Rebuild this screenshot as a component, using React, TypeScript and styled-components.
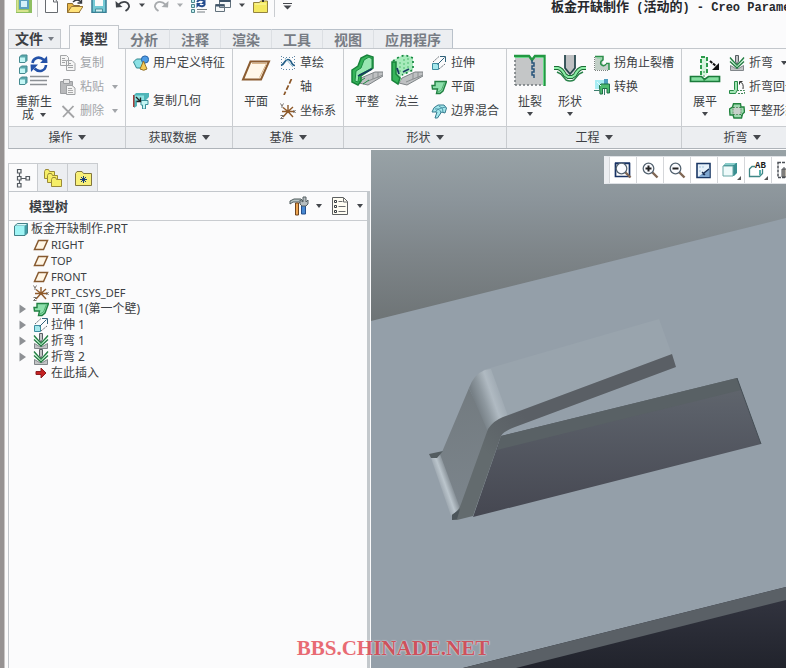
import React from "react";
import styled, { createGlobalStyle, css } from "styled-components";

const GlobalStyle = createGlobalStyle`
  * { box-sizing: border-box; }
  body {
    margin: 0;
    background: #fbfbfc;
    color: #3c3f44;
    font: 12px/16px "Noto Sans", "Noto Sans CJK SC", sans-serif;
    overflow: hidden;
  }
  button {
    margin: 0;
    padding: 0;
    border: 0;
    background: none;
    color: inherit;
    font: inherit;
    cursor: pointer;
  }
  svg { display: block; flex: none; }
`;

/* ---------- layout ---------- */

const Window = styled.div`
  position: relative;
  display: flex;
  flex-direction: column;
  min-height: 100vh;
  padding-left: 4px;
  border-left: 4px solid #969292;
  box-shadow: inset 1px 0 0 #c9c7c7;
  overflow: hidden;
`;

const TitleBar = styled.header`
  display: flex;
  justify-content: space-between;
  height: 25px;
  padding-left: 8px;
`;

const QuickAccess = styled.div`
  display: flex;
  gap: 8px;
  height: 17px;
`;

const QuickButton = styled.button`
  height: 13px;
`;

const QuickDivider = styled.span`
  width: 1px;
  margin: 0 -3px;
  background: #c9ccd0;
`;

const Title = styled.h1`
  flex: 0 0 235px;
  min-width: 0;
  margin: 0;
  white-space: pre;
  color: #26282c;
  font: bold 12px/12px "Liberation Mono", "Noto Sans CJK SC", monospace;
`;

const TitleHan = styled.span`
  font-family: "Noto Sans CJK SC", sans-serif;
  font-size: 13px;
`;

const TabBar = styled.nav`
  display: flex;
  align-items: flex-end;
  height: 24px;
  border-bottom: 1px solid #c3c7cc;
  font-size: 14px;
  font-weight: bold;
`;

const FileButton = styled.button`
  display: flex;
  align-items: center;
  justify-content: center;
  gap: 5px;
  width: 53px;
  height: 19px;
  margin-right: 8px;
  border: 1px solid #c3c7cc;
  border-bottom: 0;
  background: #eceef1;
`;

const RibbonTab = styled.button<{ $active?: boolean }>`
  height: 19px;
  padding: 0 11px;
  border-top: 1px solid #b9c1ca;
  border-right: 1px solid #dcdfe3;
  background: #eceef1;
  color: #777c84;
  line-height: 17px;
  &:last-child { border-right-color: #b9c1ca; }
  ${(p) =>
    p.$active &&
    css`
      height: 24px;
      margin-bottom: -1px;
      padding: 0 10px;
      border: 1px solid #c3c7cc;
      border-bottom: 0;
      background: #fbfbfc;
      color: #3c3f44;
      line-height: 25px;
    `}
`;

const Ribbon = styled.div`
  display: flex;
  height: 100px;
  border-left: 1px solid #c9ccd0;
  border-bottom: 1px solid #aeb3b9;
`;

const Group = styled.section<{ $last?: boolean }>`
  display: flex;
  flex-direction: column;
  flex: ${(p) => (p.$last ? "1 0 auto" : "none")};
  border-right: 1px solid #c9ccd0;
`;

const GroupBody = styled.div`
  display: flex;
  flex: 1;
  padding: 2px 7px 0 3px;
`;

const GroupLabel = styled.button<{ $last?: boolean }>`
  display: flex;
  align-items: center;
  justify-content: center;
  gap: 5px;
  width: ${(p) => (p.$last ? "120px" : "100%")};
  height: 21px;
`;

const GroupFooter = styled.div`
  border-top: 1px solid #c9ccd0;
  background: #eceef1;
`;

const LargeButton = styled.button<{ $wide?: boolean }>`
  display: flex;
  flex-direction: column;
  align-items: center;
  width: ${(p) => (p.$wide ? "44px" : "40px")};
  padding-top: 3px;
  line-height: ${(p) => (p.$wide ? "13px" : "14px")};
  svg + span { margin-top: 9px; }
  span + svg { margin-top: 3px; }
`;

const LargeLabel = styled.span`
  display: flex;
  align-items: center;
  gap: 6px;
`;

const SmallColumn = styled.div<{ $spread?: boolean }>`
  display: flex;
  flex-direction: column;
  gap: ${(p) => (p.$spread ? "14px" : "0")};
  margin-left: 4px;
`;

const SmallButton = styled.button`
  display: flex;
  align-items: center;
  gap: 4px;
  height: 24px;
  white-space: nowrap;
  &:disabled { color: #a2a5a9; }
  span + svg { margin-left: 4px; }
`;

const Workspace = styled.main`
  display: grid;
  grid-template-columns: 363px minmax(0, 1fr);
  flex: 1;
`;

const Sidebar = styled.aside`
  display: flex;
  flex-direction: column;
  padding-top: 14px;
`;

const PanelTabs = styled.div`
  display: flex;
  height: 28px;
`;

const PanelTab = styled.button<{ $active?: boolean }>`
  display: flex;
  align-items: center;
  justify-content: center;
  width: 30px;
  border: 1px solid #c9ccd0;
  border-left-width: ${(p) => (p.$active ? "1px" : "0")};
  border-bottom: 0;
  background: ${(p) => (p.$active ? "#fbfbfc" : "#eceef1")};
`;

const Panel = styled.div`
  flex: 1;
  margin-right: 1px;
  border: 1px solid #c3c7cc;
  border-right: 3px solid #c3c8cc;
  border-bottom: 0;
`;

const PanelHeader = styled.div`
  display: flex;
  align-items: center;
  height: 29px;
  padding: 0 4px 0 20px;
  border-bottom: 1px solid #c9ccd0;
`;

const PanelTitle = styled.h2`
  flex: 1;
  margin: 0;
  font-size: 13px;
  line-height: 16px;
`;

const MenuButton = styled.button`
  display: flex;
  align-items: center;
  gap: 7px;
  margin-left: 8px;
`;

const Tree = styled.ul`
  margin: 0;
  padding: 0;
  list-style: none;
`;

const TreeRow = styled.li<{ $root?: boolean }>`
  display: flex;
  align-items: center;
  gap: 2px;
  height: 16px;
  padding-left: ${(p) => (p.$root ? "4px" : "10px")};
  white-space: nowrap;
`;

const TreeToggle = styled.button`
  display: flex;
  align-items: center;
  width: 12px;
  height: 16px;
`;

const TreeName = styled.span<{ $latin?: boolean }>`
  font-size: ${(p) => (p.$latin ? "11px" : "12px")};
`;

const Viewport = styled.section`
  position: relative;
  display: flex;
  min-width: 0;
  margin-top: 1px;
`;

const ViewToolbar = styled.div`
  position: absolute;
  top: 6px;
  left: 233px;
  display: flex;
  width: 190px;
  height: 28px;
  border: 1px solid #dfe2e6;
  border-left: 5px solid #eceef1;
  background: #fff;
`;

const ViewButton = styled.button`
  display: flex;
  align-items: center;
  justify-content: center;
  flex: none;
  width: 27px;
  border-left: 1px solid #d5d7da;
`;

const Watermark = styled.footer`
  position: absolute;
  right: 0;
  bottom: 8px;
  left: -4px;
  color: #e2353f;
  font: bold 21px/24px "Liberation Serif", serif;
  text-align: center;
  text-shadow: 0 0 1px #fff, 0 0 2px #fff;
  opacity: 0.72;
  pointer-events: none;
`;

/* ---------- icons ---------- */

type IconProps = { children: React.ReactNode; size?: number };
const Icon = ({ children, size = 16 }: IconProps) => (
  <svg width={size} height={size} viewBox={`0 0 ${size} ${size}`} fill="none" aria-hidden="true">
    {children}
  </svg>
);

/* Toolbar glyphs are drawn on a 16px grid whose first three rows are above the window edge. */
const QuickIcon = ({ children }: { children: React.ReactNode }) => (
  <svg width="16" height="13" viewBox="0 3 16 13" fill="none" aria-hidden="true">
    {children}
  </svg>
);

const Caret = ({ color = "#44474c", size = 8 }: { color?: string; size?: number }) => (
  <svg width={size} height={size === 8 ? 5 : 4} viewBox="0 0 8 5" preserveAspectRatio="none" aria-hidden="true">
    <path d="M0 0h8L4 5z" fill={color} />
  </svg>
);

const QuickCaret = ({ color = "#44474c" }: { color?: string }) => (
  <svg width="6" height="13" viewBox="0 0 6 13" aria-hidden="true">
    <path d="M0 3.500h6L3 7z" fill={color} />
  </svg>
);

const PlaneIcon = () => (
  <Icon>
    <path d="M5.500 3.500h9l-4 9h-9z" fill="#fff6e6" stroke="#875a30" strokeWidth="1.500" />
  </Icon>
);

const CsysIcon = () => (
  <Icon>
    <path d="M8 8.500V2M8 8.500h6M8 8.500 3 14M8 8.500 3 4.500M8 8.500l5 5.500M8 8.500 13 4M8 8.500H2" stroke="#8f5a2a" strokeWidth="1.400" />
    <path d="M0.500 .5 2 3l1.500-2.500M2 3v2M13.500 7l2 3M15.500 7l-2 3M.5 12.500h3l-3 3h3" stroke="#77716c" />
  </Icon>
);

const WallIcon = () => (
  <Icon>
    <path d="M4 2.500h11.500L12 12l-3 2.500H5.500L6.500 10H1.500L1 6.500h3z" fill="#8ee0ac" stroke="#218042" strokeWidth="1.400" />
    <path d="M13.500 3.500 10.500 11 7 13" stroke="#4eae6e" />
  </Icon>
);

const ExtrudeIcon = () => (
  <Icon>
    <path d="M1.500 8.500h6v6h-6z" fill="#a5e8ec" stroke="#3e8ca0" />
    <path d="M2 7 8 1.500M8 14l6-5" stroke="#646b72" strokeDasharray="2 1" />
    <path d="m6.500 9.500 7-7M9 1.500h5.500V7" stroke="#31627b" />
  </Icon>
);

const BendIcon = () => (
  <Icon>
    <path d="M1.500 15.500v-5l5 3h3l5-3v5z" fill="#c2c4c5" stroke="#81868a" />
    <path d="M6.500 .5h3v6L8 9 6.500 7z" fill="#c2c4c5" stroke="#565d62" />
    <path d="m1 2.500 7 8 7-8M1 6.500l7 6.500 7-6.500" stroke="#217b40" strokeWidth="1.300" />
    <path d="m1.500 4.500 6.500 7 6.500-7" stroke="#89d8a1" />
  </Icon>
);

const CopyIcon = () => (
  <Icon>
    <path d="M.5.500h6l2 2v8h-8zM6.500 5.500h5.500l3 3v7H6.500z" fill="#f5f5f5" stroke="#a3a5a7" />
    <path d="M2 3.500h3M2 5.500h4M2 7.500h3M8 8.500h3M8 10.500h5M8 12.500h5" stroke="#a3a5a7" />
  </Icon>
);

const PasteIcon = () => (
  <Icon>
    <path d="M.5 2.500h12v12H.5z" fill="#b8b9bb" stroke="#9c9ea1" />
    <path d="M3.500.500h6v4h-6z" fill="#e6e6e6" stroke="#9c9ea1" />
    <path d="M6.500 6.500h5.500L15 9v6.500H6.500z" fill="#f4f4f4" stroke="#a0a2a4" />
    <path d="M8 9.500h4M8 11.500h5M8 13.500h5" stroke="#aaa" />
  </Icon>
);

const DeleteIcon = () => (
  <Icon>
    <path d="M2.500 3 14 14.500M13.500 3 3 14" stroke="#a3a4a6" strokeWidth="1.800" />
  </Icon>
);

const RegenerateIcon = () => (
  <Icon size={32}>
    {[1, 12, 23].map((y) => (
      <g key={y}>
        <path d={`M1.500 ${y + 2} 3.500 ${y}h5.500v5.500l-2 2h-5.500z`} fill="#5aa9ad" stroke="#458a90" />
        <path d={`M2 ${y + 2.5}h5v4.500H2z`} fill="#c4f6f5" />
      </g>
    ))}
    <path d="M14.500 9C15 4 21 1.500 26 6M28 11c-.5 6-7 8-11.500 3.500" stroke="#2452a8" strokeWidth="2.600" />
    <path d="m29 2 .5 7h-7.500zM13 18l-.5-7.500H20z" fill="#2452a8" />
    <path d="M12 22.500h19M12 26.500h17M12 30.500h17" stroke="#8c9095" strokeWidth="1.400" />
  </Icon>
);

const UserFeatureIcon = () => (
  <Icon>
    <path d="m.5 7 3-3h7v6l-3 3h-4z" fill="#8ce1e5" stroke="#2e858d" />
    <circle cx="12" cy="4.500" r="3.600" fill="#4e9ce6" stroke="#2461a7" />
    <path d="m10.500 6 3.500 8q-3 2.500-7 0z" fill="#f5ca54" stroke="#91712c" />
  </Icon>
);

const CopyGeometryIcon = () => (
  <Icon>
    <path d="M1 2 3 0h13v4l-3 3v9H9V8H4v5l-3 2z" fill="#4fb5b8" />
    <path d="M.750 2v12" stroke="#a43b38" strokeWidth="1.500" />
    <path d="M2 2.500h9v5H2z" fill="#8fe3e2" />
    <path d="M8 7.500h7v4h-2.500V16H9.500v-4H8z" fill="#c4f6f4" stroke="#3b8f98" />
    <path d="m3 4 4 4M7.500 4.500V8.500H3.500" stroke="#222" strokeWidth="1.300" />
  </Icon>
);

const LargePlaneIcon = () => (
  <Icon size={32}>
    <path d="M10.500 7.500h18.500l-8 18H3z" fill="#fff7e9" stroke="#8b5c31" strokeWidth="2" />
    <path d="M12 9.500h14.500L19.500 23.500" stroke="#d9b58b" />
  </Icon>
);

const SketchIcon = () => (
  <Icon>
    <path d="M1.500 1v14M14.500 1v14M3 2.500h10M3 14.500h10" stroke="#5f86a5" strokeDasharray="1 2" />
    <path d="M1 10.500Q3 10 5 6.500q3-4 6 0 1.500 4 4 4" stroke="#245e87" strokeWidth="1.700" />
    <path d="m5 3 8 9" stroke="#8ab8d0" />
  </Icon>
);

const AxisIcon = () => (
  <Icon>
    <path d="M11.500 0 4 16" stroke="#8a5527" strokeWidth="1.700" strokeDasharray="5 2" />
  </Icon>
);

const FlatWallIcon = () => (
  <Icon size={32}>
    <path d="m10 24 14-6h8v4L17 31l-9-2z" fill="#bfc1c3" stroke="#7e8386" />
    <path d="m17 27 15-6M22 19v6M27 18v6" stroke="#8b9092" />
    <path d="M1 16 7 12l3-8 6-3 6 2v11l-12 8v5l-3 4-6-3z" fill="#36b45a" stroke="#18823b" strokeWidth="1.500" />
    <path d="m5 17 5-3 3-8 5-3 3 2v9L8 21l-1 7-3-1z" fill="#98e7b1" stroke="#1a8c41" />
    <path d="m7 22 14-7" stroke="#173b62" strokeWidth="1.800" />
    <path d="m8 28 6-4M12 30l6-4" stroke="#208c43" />
  </Icon>
);

const FlangeIcon = () => (
  <Icon size={32}>
    <path d="m11 24 13-6h8v4l-16 9-8-2z" fill="#bfc1c3" stroke="#7e8386" />
    <path d="m15 28 17-7M22 19v6M27 18v6" stroke="#8b9092" />
    <path d="M1 7 8 3l5-2 9 2v13l-12 6v4l-3 4-6-3z" fill="#a7eabb" />
    <path d="M1 8h4v12l4 4-2 6-6-4z" fill="#36b45a" stroke="#18823b" strokeWidth="1.500" />
    <path d="M2 7 8 3l6-2 8 3v12L11 21" stroke="#158740" strokeWidth="1.700" strokeDasharray="2 3" />
    <path d="M9 8v12M13 5v12M17 4v10" stroke="#4fbb70" strokeDasharray="2 2" />
    <path d="m6 14 2 6M12 18l6-3" stroke="#173b62" strokeWidth="1.800" />
  </Icon>
);

const BlendIcon = () => (
  <Icon>
    <path d="M1 9q1-5 6-7h6l2.500 3-1.500 5-3.500-1-4 6H4l2-6z" fill="#a3e7ec" stroke="#377a8d" />
    <path d="M4 6q5-1 6 4M8 3q5 2 4 6M4 9q3-4 11-5" stroke="#4d94a7" />
  </Icon>
);

const RipIcon = () => (
  <Icon size={32}>
    <path d="M1 2h28v29H1z" fill="#c4c6c7" />
    <path d="M1 31h27M1 6v25" stroke="#70777b" strokeWidth="1.500" strokeDasharray="2 2" />
    <path d="M15 1h6l-3 4z" fill="#fbfbfc" />
    <path d="M0 2h15l3 4 3-4h9.500v30" stroke="#239843" strokeWidth="2.400" />
    <path d="M1 3.500h13M29.500 4v27M22 3.500h7" stroke="#65d987" />
    <path d="M18 6v3h2v3h-2v3h2v3h-2v3h2v3" stroke="#28547b" strokeWidth="1.500" />
  </Icon>
);

const FormIcon = () => (
  <Icon size={32}>
    <path d="M10.500 1h11v14q-1 4-5.500 6-4.500-2-5.500-6z" fill="#bfc1c3" />
    <path d="M11 1v13l5 6 5-6V1" stroke="#23444a" strokeWidth="1.700" />
    <path d="M0 14h4q4 1 7 7l3 2h4l3-2q3-6 7-7h4" stroke="#1d6c36" strokeWidth="4" />
    <path d="M0 14h4q4 1 7 7l3 2h4l3-2q3-6 7-7h4" stroke="#8ceda7" strokeWidth="2" />
    <path d="m3 18 4 2 5 6q4 2 8 0l5-6 4-2" stroke="#29834b" strokeWidth="1.500" />
  </Icon>
);

const CornerReliefIcon = () => (
  <Icon>
    <path d="M1 1h8v5a3 3 0 0 0 0 3.500h6V15H1z" fill="#c3d0c8" />
    <path d="M.500 2v13.500H15" stroke="#7b827f" strokeDasharray="1 1" />
    <path d="M1 1.500h8v3.500M15 15V8.500h-3M9.500 5a2.800 2.800 0 1 0 2.500 4" stroke="#2c8f4a" strokeWidth="1.500" />
    <path d="M7 5.500V3H3" stroke="#7bdc97" />
  </Icon>
);

const ConvertIcon = () => (
  <Icon>
    <path d="M1 1h11l-2 2v7H1z" fill="#a8edf3" />
    <path d="M10 0h4v6h-4z" fill="#4f9fc0" />
    <path d="M5.500 6.500 7 5h8.500v9H13V9.500H8.500V15H6z" fill="#4ebc70" stroke="#1e6f46" />
    <path d="M0 11.500h5.500M10.500 10v6" stroke="#3b7e6e" />
    <path d="m3 3 4 4" stroke="#e3fbfd" />
  </Icon>
);

const UnbendIcon = () => (
  <Icon size={32}>
    <path d="M1.500 22.500h11l3 3 4-3h11v5h-29z" fill="#84dda0" stroke="#1b7b3b" strokeWidth="1.700" />
    <path d="M12 21V3h6v18" fill="#d8f4df" stroke="#2d9b4c" strokeWidth="2" strokeDasharray="4 2" />
    <path d="M15 17v10" stroke="#2d9b4c" strokeDasharray="2 2" />
    <path d="m21 7 7 6" stroke="#111" strokeWidth="2" strokeDasharray="3 1" />
    <path d="M30 9v7h-7z" fill="#111" />
  </Icon>
);

const BendBackIcon = () => (
  <Icon>
    <path d="M.5 11.500h4l1-1v-8h3v8.500l-2 3.500h-6z" fill="#a3e5b5" stroke="#258a46" />
    <path d="M8 11.500h7.500v3H8" stroke="#418757" strokeDasharray="2 1" />
    <path d="M11 3q4 1 3 7M10.500 5.500V2.500h3" stroke="#333" />
  </Icon>
);

const FlatPatternIcon = () => (
  <Icon>
    <path d="M4.500.750h7L12 4h3l.5 5-2 2-1 4H5l-1-3H1L.5 6l3-2z" fill="#9fd9b0" stroke="#23843f" strokeWidth="1.400" />
    <path d="M4 4.500h8v7H4z" fill="#c7d0ca" stroke="#67936e" strokeDasharray="2 1" />
    <path d="m3 3 2 2M11 11l2 2M12 4l-1 1M4 12l1-1" stroke="#2f7b45" />
  </Icon>
);

const FolderShape = ({ x, y }: { x: number; y: number }) => (
  <path d={`M${x} ${y + 2}l1-2h3l1 2h5v7h-10z`} fill="#f6ee67" stroke="#9b8b38" />
);

const FolderStackIcon = () => (
  <Icon size={20}>
    <FolderShape x={1.5} y={1.5} />
    <FolderShape x={4.5} y={5.5} />
    <FolderShape x={8.5} y={9.5} />
  </Icon>
);

const FavoritesIcon = () => (
  <Icon size={20}>
    <path d="M2.500 5.500 4 3.500h5l1.500 2h8v12h-16z" fill="#f8f078" stroke="#82763d" />
    <path d="M10.500 8v7M7 11.500h7M8 9l5 5M13 9l-5 5" stroke="#153b7a" />
  </Icon>
);

const ModelTreeIcon = () => (
  <Icon size={20}>
    <path d="M4.500 1.500h3.500v3.500H4.500zM4.500 8.500h3.500V12H4.500zM4.500 15.500h3.500V19H4.500zM13 8.500h3.500V12H13zM6.500 5v3.500M6.500 12v3.500M8 10.500h5" stroke="#555b61" strokeWidth="1.200" />
  </Icon>
);

const PartIcon = () => (
  <Icon>
    <path d="m1.500 5 3-2.500h10V12L12 14.500H1.500z" fill="#429da5" stroke="#438088" />
    <path d="M2 5h9.500v9H2z" fill="#9ff4f5" />
    <path d="m2.500 4.500 2-1.500h9.500l-2 1.500z" fill="#dafafa" />
  </Icon>
);

const InsertIcon = () => (
  <Icon>
    <path d="M3 6.500h5V3l5 5-5 5v-3.500H3z" fill="#c62222" stroke="#8d1e22" />
  </Icon>
);

const ToolsIcon = () => (
  <Icon size={20}>
    <path d="M1 8V5l4-2h7l3 3-2 2-3-2H4z" fill="#b8c5c5" stroke="#4e5a5c" />
    <path d="M6.500 7h3v12h-3z" fill="#eda653" stroke="#70451e" />
    <path d="M12.500 8h4v10h-4z" fill="#4889d2" stroke="#254f8c" />
    <path d="m11 4 3 2V1h3v5l2-2v4l-2 2h-4l-2-2z" fill="#b7bec0" stroke="#555f62" />
  </Icon>
);

const ListIcon = () => (
  <Icon size={20}>
    <path d="M2.500 1.500h11l4 4v13h-15z" fill="#fffdf3" stroke="#5e6061" />
    <path d="M13.500 2v4h4M8.500 5.500h4M8.500 10.500h7M8.500 15.500h7" stroke="#6b6c6e" />
    <path d="M4.500 4.500h2v2h-2zM4.500 9.500h2v2h-2zM4.500 14.500h2v2h-2z" stroke="#383d42" />
  </Icon>
);

const ZoomIcon = ({ kind }: { kind: "fit" | "in" | "out" }) => (
  <Icon size={18}>
    {kind === "fit" && <path d="M1.500 2.500h14v13h-14zM1 2h15" stroke="#183365" strokeWidth="1.700" />}
    <path d="m11 11 5.500 5.500" stroke="#806754" strokeWidth="2.400" />
    <circle cx="7.500" cy="7.500" r="5.300" fill="#fbfcff" stroke="#566572" strokeWidth="1.300" />
    {kind !== "fit" && <path d="M4.500 7.500h6" stroke="#222" strokeWidth="2" />}
    {kind === "in" && <path d="M7.500 4.500v6" stroke="#222" strokeWidth="2" />}
  </Icon>
);

const RepaintIcon = () => (
  <Icon size={18}>
    <path d="M2 2.500h13v14H2z" fill="#e6f1fa" stroke="#193765" strokeWidth="1.600" />
    <path d="M14.500 7 8 12l-5 4h11.500z" fill="#7ea6d0" />
    <path d="m14 8-5 4-1 2M7 11l3 3" stroke="#1d3155" strokeWidth="1.300" />
    <path d="M5 5v2M8 5v2M5 9v2" stroke="#a6c5df" />
  </Icon>
);

const DisplayStyleIcon = () => (
  <Icon size={20}>
    <path d="m2 6 3-3h11v10l-3 3H2z" fill="#398f91" />
    <path d="M2 6h10v10H2z" fill="#eefafa" stroke="#69a7a6" />
    <path d="m3 5 2-2h10l-2 2z" fill="#89cdca" />
    <path d="M20 16v4h-4z" fill="#555" />
  </Icon>
);

const SavedViewIcon = () => (
  <Icon size={20}>
    <path d="M7 6.500H4L1.500 9v7.500h10l3-3V9" fill="#fff" stroke="#408887" strokeWidth="1.300" />
    <path d="M12 10v5" stroke="#56b0ac" strokeWidth="2" />
    <text x="7" y="8" fill="#1c1d20" fontFamily="Liberation Mono, monospace" fontSize="9" fontWeight="bold">AB</text>
    <path d="M20 16v4h-4z" fill="#555" />
  </Icon>
);

const ViewManagerIcon = () => (
  <Icon size={18}>
    <path d="M2 1.500h14v15H2z" stroke="#4d5258" strokeWidth="1.500" strokeDasharray="3 1" />
    <path d="M6 8h7v8H6z" fill="#b9b3a7" stroke="#45494e" />
    <path d="M8 6v10" stroke="#45494e" />
  </Icon>
);

const Expander = () => (
  <svg width="7" height="10" viewBox="0 0 7 10" aria-hidden="true">
    <path d="M.5.500v9L7 5z" fill="#8e9195" />
  </svg>
);

/* ---------- model rendering ---------- */

const ModelScene = () => (
  <svg width="100%" height="100%" viewBox="0 0 415 518" preserveAspectRatio="xMinYMin slice" role="img" aria-label="3D">
    <defs>
      <linearGradient id="backdrop" gradientUnits="userSpaceOnUse" x1="0" y1="0" x2="0" y2="518">
        <stop offset="0" stopColor="#98a2a6" />
        <stop offset="0.100" stopColor="#8b949a" />
        <stop offset="0.200" stopColor="#7e8589" />
        <stop offset="0.330" stopColor="#6e7476" />
        <stop offset="0.500" stopColor="#5b6069" />
        <stop offset="0.700" stopColor="#464852" />
        <stop offset="0.880" stopColor="#30323d" />
        <stop offset="1" stopColor="#21232c" />
      </linearGradient>
      <linearGradient id="upperBend" gradientUnits="userSpaceOnUse" x1="101" y1="244" x2="130" y2="234">
        <stop offset="0" stopColor="#757e84" />
        <stop offset="0.300" stopColor="#8e989f" />
        <stop offset="0.600" stopColor="#b0bac2" />
        <stop offset="1" stopColor="#99a4ad" />
      </linearGradient>
      <linearGradient id="lowerBend" gradientUnits="userSpaceOnUse" x1="68" y1="337" x2="82" y2="332">
        <stop offset="0" stopColor="#959fa8" />
        <stop offset="0.450" stopColor="#bbc5cc" />
        <stop offset="1" stopColor="#747d84" />
      </linearGradient>
      <linearGradient id="legFace" gradientUnits="userSpaceOnUse" x1="85" y1="240" x2="100" y2="350">
        <stop offset="0" stopColor="#737b80" />
        <stop offset="1" stopColor="#7b848b" />
      </linearGradient>
      <linearGradient id="sheetEdge" gradientUnits="userSpaceOnUse" x1="150" y1="262" x2="112" y2="300">
        <stop offset="0" stopColor="#5a5f65" />
        <stop offset="1" stopColor="#636b6e" />
      </linearGradient>
    </defs>
    <rect width="415" height="518" fill="url(#backdrop)" />
    <path d="M0 171 415 68v369L92 518H0z" fill="#949fa9" />
    <path d="M92 518 415 437v13L145 518z" fill="#5a6066" />
    <path d="M130 286 366 228l24 66-288 73z" fill="url(#backdrop)" />
    <path d="M130 286 366 228l4 12-244 60z" fill="#596165" />
    <path d="m366 228 24 66" stroke="#454e55" />
    <path d="m112 220 176-51 13 36-165 60-12 15z" fill="#99a4ad" />
    <path d="m98 238-27 64-10 6 28 52 29-80z" fill="url(#legFace)" />
    <path d="M98 238q5-14 16-18l6-1 17 47-20 16z" fill="url(#upperBend)" />
    <path d="M60 308q7 0 9-4l20 54-9 8z" fill="url(#lowerBend)" />
    <path d="m58 304 14-3-6 7h-6z" fill="#535c60" />
    <path d="m301 204 4 13-161 60q-11 4-14 9l-28 80-16 4h-5v-5q7-4 9-11l27-75q5-8 15-12z" fill="url(#sheetEdge)" />
    <path d="m81 365 8-6-3 10-5 1z" fill="#4c555a" />
  </svg>
);

/* ---------- ribbon content ---------- */

type GroupProps = { label: string; last?: boolean; children: React.ReactNode };
const RibbonGroup = ({ label, last, children }: GroupProps) => (
  <Group $last={last}>
    <GroupBody>{children}</GroupBody>
    <GroupFooter>
      <GroupLabel $last={last}>
        <span>{label}</span>
        <Caret />
      </GroupLabel>
    </GroupFooter>
  </Group>
);

type CommandProps = { icon: React.ReactNode; label: string; menu?: boolean; disabled?: boolean };
const Small = ({ icon, label, menu, disabled }: CommandProps) => (
  <SmallButton disabled={disabled}>
    {icon}
    <span>{label}</span>
    {menu && <Caret size={6} color={disabled ? "#a2a5a9" : undefined} />}
  </SmallButton>
);

const Large = ({ icon, label, menu }: CommandProps) => (
  <LargeButton>
    {icon}
    <span>{label}</span>
    {menu && <Caret size={6} />}
  </LargeButton>
);

const tabs = ["模型", "分析", "注释", "渲染", "工具", "视图", "应用程序"];

const features: { name: string; icon: React.ReactNode; latin?: boolean; expandable?: boolean }[] = [
  { name: "RIGHT", icon: <PlaneIcon />, latin: true },
  { name: "TOP", icon: <PlaneIcon />, latin: true },
  { name: "FRONT", icon: <PlaneIcon />, latin: true },
  { name: "PRT_CSYS_DEF", icon: <CsysIcon />, latin: true },
  { name: "平面 1(第一个壁)", icon: <WallIcon />, expandable: true },
  { name: "拉伸 1", icon: <ExtrudeIcon />, expandable: true },
  { name: "折弯 1", icon: <BendIcon />, expandable: true },
  { name: "折弯 2", icon: <BendIcon />, expandable: true },
  { name: "在此插入", icon: <InsertIcon /> },
];

export default function App() {
  return (
    <>
      <GlobalStyle />
      <Window>
        <TitleBar>
          <QuickAccess>
            <QuickButton aria-label="Creo">
              <QuickIcon>
                <path d="M0 0h16v16H0z" fill="#8fbf62" />
                <path d="M1.500 0v14h11" stroke="#d7e48d" strokeWidth="2" />
                <path d="M4 3h8v8H4z" fill="#d5f1fa" stroke="#5aa0c0" strokeWidth="2" />
              </QuickIcon>
            </QuickButton>
            <QuickDivider />
            <QuickButton aria-label="新建">
              <QuickIcon><path d="M2.500 0h8l4 5v10.500h-12zM10.500 0v5h4" fill="#fff" stroke="#676b70" /></QuickIcon>
            </QuickButton>
            <QuickButton aria-label="打开">
              <QuickIcon>
                <path d="M.5 15.500v-9h5l1 2h6v7z" fill="#e9b847" stroke="#8d6c2d" />
                <path d="m.5 15.500 4-6H16l-4 6z" fill="#ffe279" stroke="#987538" />
                <path d="M6 5q4-4 8 0M14.500 2v4h-4" stroke="#35393f" strokeWidth="1.400" />
              </QuickIcon>
            </QuickButton>
            <QuickButton aria-label="保存">
              <QuickIcon>
                <path d="M1 1h14v14.500H1z" fill="#74c9d5" stroke="#377e94" strokeWidth="1.500" />
                <path d="M4 1h8v8H4z" fill="#fafafa" />
                <path d="M4.500 12h7v3h-7z" fill="#d4f0f1" stroke="#488f9c" />
              </QuickIcon>
            </QuickButton>
            <QuickButton aria-label="撤消">
              <QuickIcon>
                <path d="M3 8Q8 3 12.500 6q4 4-2 8" stroke="#3f4348" strokeWidth="1.800" />
                <path d="m.5 4 .5 6.500 6.500-.5z" fill="#3f4348" />
              </QuickIcon>
            </QuickButton>
            <QuickCaret />
            <QuickButton aria-label="重做">
              <QuickIcon>
                <path d="M13 8Q8 3 3.500 6q-4 4 2 8" stroke="#a8abae" strokeWidth="1.800" />
                <path d="m15.500 4-.5 6.500-6.500-.5z" fill="#a8abae" />
              </QuickIcon>
            </QuickButton>
            <QuickCaret color="#a8abae" />
            <QuickButton aria-label="重新生成">
              <QuickIcon>
                <path d="M.5 2.500h3v3h-3zM.5 7.500h3v3h-3zM.5 12.500h3v3h-3z" fill="#bdeced" stroke="#4d858d" />
                <path d="M6 5q3-4 7-1M14 7q-2 4-7 1" stroke="#234b8d" strokeWidth="2" />
                <path d="M14.500 2v5H10zM5.500 11V6H10z" fill="#234b8d" />
                <path d="M6 12.500h10M6 15h8" stroke="#777e83" />
              </QuickIcon>
            </QuickButton>
            <QuickButton aria-label="窗口">
              <QuickIcon>
                <path d="M4.500 2.500h11v8h-11zM.5 7.500h9v7h-9z" fill="#f5f7f8" stroke="#62717c" />
                <path d="M4.500 4h11M1 8.500h8" stroke="#3d5369" strokeWidth="2" />
              </QuickIcon>
            </QuickButton>
            <QuickCaret />
            <QuickButton aria-label="文件夹">
              <QuickIcon>
                <path d="M.5 5.500h6l1-1.500h7V15.500H.5z" fill="#f4e960" stroke="#938341" />
                <path d="M2 7h11" stroke="#fdf9af" />
                <path d="M10 0v5" stroke="#2e3032" strokeWidth="2" />
              </QuickIcon>
            </QuickButton>
            <QuickDivider />
            <QuickButton aria-label="自定义">
              <QuickIcon><path d="M3 6.500h9" stroke="#44474c" /><path d="M3.500 8.500h8l-4 4z" fill="#44474c" /></QuickIcon>
            </QuickButton>
          </QuickAccess>
          <Title>
            <TitleHan>板金开缺制作</TitleHan>{" ("}<TitleHan>活动的</TitleHan>{") - Creo Parame"}
          </Title>
        </TitleBar>

        <TabBar>
          <FileButton>文件<Caret size={6} color="#777c84" /></FileButton>
          {tabs.map((tab, i) => (
            <RibbonTab key={tab} $active={i === 0}>{tab}</RibbonTab>
          ))}
        </TabBar>

        <Ribbon>
          <RibbonGroup label="操作">
            <LargeButton $wide>
              <RegenerateIcon />
              <span>重新生</span>
              <LargeLabel>成<Caret size={6} /></LargeLabel>
            </LargeButton>
            <SmallColumn>
              <Small icon={<CopyIcon />} label="复制" disabled />
              <Small icon={<PasteIcon />} label="粘贴" menu disabled />
              <Small icon={<DeleteIcon />} label="删除" menu disabled />
            </SmallColumn>
          </RibbonGroup>
          <RibbonGroup label="获取数据">
            <SmallColumn $spread>
              <Small icon={<UserFeatureIcon />} label="用户定义特征" />
              <Small icon={<CopyGeometryIcon />} label="复制几何" />
            </SmallColumn>
          </RibbonGroup>
          <RibbonGroup label="基准">
            <Large icon={<LargePlaneIcon />} label="平面" />
            <SmallColumn>
              <Small icon={<SketchIcon />} label="草绘" />
              <Small icon={<AxisIcon />} label="轴" />
              <Small icon={<CsysIcon />} label="坐标系" />
            </SmallColumn>
          </RibbonGroup>
          <RibbonGroup label="形状">
            <Large icon={<FlatWallIcon />} label="平整" />
            <Large icon={<FlangeIcon />} label="法兰" />
            <SmallColumn>
              <Small icon={<ExtrudeIcon />} label="拉伸" />
              <Small icon={<WallIcon />} label="平面" />
              <Small icon={<BlendIcon />} label="边界混合" />
            </SmallColumn>
          </RibbonGroup>
          <RibbonGroup label="工程">
            <Large icon={<RipIcon />} label="扯裂" menu />
            <Large icon={<FormIcon />} label="形状" menu />
            <SmallColumn>
              <Small icon={<CornerReliefIcon />} label="拐角止裂槽" />
              <Small icon={<ConvertIcon />} label="转换" />
            </SmallColumn>
          </RibbonGroup>
          <RibbonGroup label="折弯" last>
            <Large icon={<UnbendIcon />} label="展平" menu />
            <SmallColumn>
              <Small icon={<BendIcon />} label="折弯" menu />
              <Small icon={<BendBackIcon />} label="折弯回去" />
              <Small icon={<FlatPatternIcon />} label="平整形态" />
            </SmallColumn>
          </RibbonGroup>
        </Ribbon>

        <Workspace>
          <Sidebar>
            <PanelTabs>
              <PanelTab $active aria-label="模型树"><ModelTreeIcon /></PanelTab>
              <PanelTab aria-label="文件夹浏览器"><FolderStackIcon /></PanelTab>
              <PanelTab aria-label="收藏夹"><FavoritesIcon /></PanelTab>
            </PanelTabs>
            <Panel>
              <PanelHeader>
                <PanelTitle>模型树</PanelTitle>
                <MenuButton aria-label="设置"><ToolsIcon /><Caret size={6} /></MenuButton>
                <MenuButton aria-label="显示"><ListIcon /><Caret size={6} /></MenuButton>
              </PanelHeader>
              <Tree>
                <TreeRow $root><PartIcon /><TreeName>板金开缺制作.PRT</TreeName></TreeRow>
                {features.map((f) => (
                  <TreeRow key={f.name}>
                    {f.expandable ? (
                      <TreeToggle aria-label={`展开 ${f.name}`}><Expander /></TreeToggle>
                    ) : (
                      <TreeToggle as="span" />
                    )}
                    {f.icon}
                    <TreeName $latin={f.latin}>{f.name}</TreeName>
                  </TreeRow>
                ))}
              </Tree>
            </Panel>
          </Sidebar>
          <Viewport>
            <ModelScene />
            <ViewToolbar>
              <ViewButton aria-label="重新调整"><ZoomIcon kind="fit" /></ViewButton>
              <ViewButton aria-label="放大"><ZoomIcon kind="in" /></ViewButton>
              <ViewButton aria-label="缩小"><ZoomIcon kind="out" /></ViewButton>
              <ViewButton aria-label="重画"><RepaintIcon /></ViewButton>
              <ViewButton aria-label="显示样式"><DisplayStyleIcon /></ViewButton>
              <ViewButton aria-label="已命名视图"><SavedViewIcon /></ViewButton>
              <ViewButton aria-label="视图管理器"><ViewManagerIcon /></ViewButton>
            </ViewToolbar>
          </Viewport>
        </Workspace>

        <Watermark>BBS.CHINADE.NET</Watermark>
      </Window>
    </>
  );
}
